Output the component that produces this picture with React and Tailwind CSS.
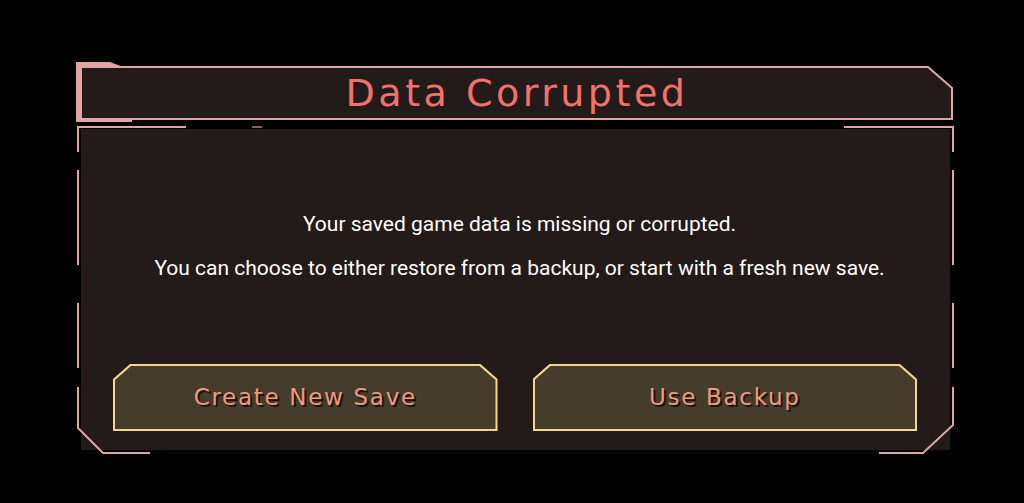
import React from 'react';

const PINK = '#dfa4a4';

// pink trim around the title bar and the message panel
const FrameLines = () => (
  <svg
    className="pointer-events-none absolute left-0 top-0"
    width="880"
    height="394"
    viewBox="0 0 880 394"
    fill="none"
  >
    {/* title bar */}
    <polygon points="0,0 34,0 47,5 0,5" fill={PINK} />
    <rect x="0" y="0" width="6" height="60" fill={PINK} />
    <rect x="0" y="56" width="56" height="4" fill={PINK} />
    <path d="M0 5 H852 L876 26 V57 H56" stroke={PINK} strokeWidth="2" />

    {/* panel */}
    <g stroke={PINK} strokeWidth="2">
      <path d="M2 90 V65 H110" />
      <path d="M176 65 H186" opacity="0.6" />
      <path d="M768 65 H877 V90" />
      <path d="M2 108 V203 M2 241 V306" />
      <path d="M2 325 V366 L27 391 H74" />
      <path d="M877 108 V203 M877 241 V306" />
      <path d="M877 325 V363 L847 391 H803" />
    </g>
  </svg>
);

const ActionButton = ({ label }) => (
  <button className="flex-1 h-[67px] bg-[#f4d78e] p-[2px] [clip-path:polygon(17px_0,calc(100%-17px)_0,100%_15px,100%_100%,0_100%,0_15px)]">
    <div className="flex h-full w-full items-center justify-center bg-[#463c2c] [clip-path:polygon(16px_0,calc(100%-16px)_0,100%_14px,100%_100%,0_100%,0_14px)]">
      <span className="font-['DejaVu_Sans',sans-serif] text-[23px] tracking-[1.7px] text-[#ec9a80] [text-shadow:2px_2px_0_#1a130d]">
        {label}
      </span>
    </div>
  </button>
);

export default function App() {
  return (
    <div className="h-[503px] w-[1024px] overflow-hidden bg-black pl-[76px] pt-[62px]">
      <div className="relative w-[879px]">
        <div className="h-[61px] pl-[6px] pt-[6px]">
          <div className="flex h-[50px] w-[870px] items-center justify-center bg-[#231a1a] [clip-path:polygon(0_0,846px_0,100%_21px,100%_100%,0_100%)]">
            <h1 className="font-['DejaVu_Sans',sans-serif] text-[38px] leading-none tracking-[3.5px] text-[#f2716b]">
              Data Corrupted
            </h1>
          </div>
        </div>

        <div className="ml-[5px] mt-[6px] flex h-[321px] w-[869px] flex-col bg-[#231a1a] pb-[19px] pl-[32px] pr-[33px] pt-[83px] font-['Roboto',sans-serif] text-white">
          <p className="pl-[9px] text-center text-[21px] leading-6">Your saved game data is missing or corrupted.</p>
          <p className="mt-[20px] pl-[9px] text-center text-[21px] leading-6">
            You can choose to either restore from a backup, or start with a fresh new save.
          </p>
          <div className="flex-1" />
          <div className="flex gap-[35px]">
            <ActionButton label="Create New Save" />
            <ActionButton label="Use Backup" />
          </div>
        </div>

        <FrameLines />
      </div>
    </div>
  );
}
